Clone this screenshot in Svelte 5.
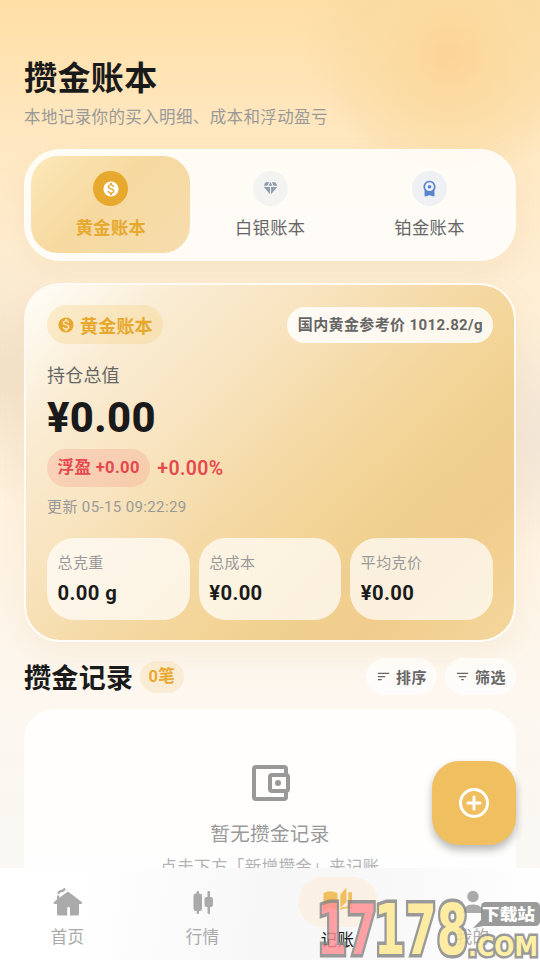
<script lang="ts">
  type Metal = 'gold' | 'silver' | 'platinum';

  const ledgers: { id: Metal; label: string }[] = [
    { id: 'gold', label: '黄金账本' },
    { id: 'silver', label: '白银账本' },
    { id: 'platinum', label: '铂金账本' },
  ];

  const stats = [
    { label: '总克重', value: '0.00 g' },
    { label: '总成本', value: '¥0.00' },
    { label: '平均克价', value: '¥0.00' },
  ];

  const navItems = [
    { id: 'home', label: '首页' },
    { id: 'market', label: '行情' },
    { id: 'ledger', label: '记账' },
    { id: 'me', label: '我的' },
  ];

  let selected = $state<Metal>('gold');
  let page = $state('ledger');
</script>

{#snippet coin()}
  <svg viewBox="0 0 24 24" fill="currentColor">
    <path
      d="M12 2C6.48 2 2 6.48 2 12s4.48 10 10 10 10-4.48 10-10S17.52 2 12 2zm1.41 16.09V20h-2.67v-1.93c-1.71-.36-3.16-1.46-3.27-3.4h1.96c.1 1.05.82 1.87 2.65 1.87 1.96 0 2.4-.98 2.4-1.59 0-.83-.44-1.61-2.67-2.14-2.48-.6-4.18-1.62-4.18-3.67 0-1.72 1.39-2.84 3.11-3.21V4h2.67v1.95c1.86.45 2.79 1.86 2.85 3.39H14.3c-.05-1.11-.64-1.87-2.22-1.87-1.5 0-2.4.68-2.4 1.64 0 .84.65 1.39 2.67 1.91s4.18 1.39 4.18 3.91c-.01 1.83-1.38 2.83-3.12 3.16z"
    />
  </svg>
{/snippet}

{#snippet ledgerIcon(id: Metal)}
  {#if id === 'gold'}
    {@render coin()}
  {:else if id === 'silver'}
    <svg viewBox="0 0 24 24" fill="currentColor">
      <path
        d="M12.16 3h-.32L9.21 8.25h5.58zM16.46 8.25h5.16L19 3h-5.16zM21.38 9.75h-8.63V20.1zM11.25 20.1V9.75H2.62zM7.54 8.25 10.16 3H5L2.38 8.25z"
      />
    </svg>
  {:else}
    <svg viewBox="0 0 24 24" fill="currentColor">
      <path
        fill-rule="evenodd"
        d="M12 1a8.5 8.5 0 0 0-7 13.3V23h3.5q1.5-1.5 3.5-1.5t3.5 1.5H19v-8.7A8.5 8.5 0 0 0 12 1zm0 2.3a6.2 6.2 0 1 1 0 12.4 6.2 6.2 0 0 1 0-12.4z"
      />
      <circle cx="12" cy="9.5" r="2.6" />
    </svg>
  {/if}
{/snippet}

{#snippet navIcon(id: string)}
  {#if id === 'home'}
    <svg viewBox="0 0 30 30" fill="currentColor">
      <path
        d="M15 4.5 29 15.2q.8 1.2-.7 1.7H26V27q0 1.5-1.5 1.5H17v-7q0-1.8-1.4-1.8t-1.4 1.8v7H5.5Q4 28.500 4 27V16.900H1.500q-1.500-.5-.7-1.700L4 12.500V8.500h2.300v2.300z"
      />
      <path d="M5.5 5.800q1-1.600 3-1.800 2-.3 2.800-1.700" fill="none" stroke="currentColor" stroke-width="2.5" stroke-linecap="round" />
    </svg>
  {:else if id === 'market'}
    <svg viewBox="0 0 30 30" fill="currentColor">
      <rect x="5.5" y="6.5" width="8.5" height="17.5" rx="2.2" />
      <rect x="8.5" y="4" width="2.5" height="23" rx="1.2" />
      <rect x="16.5" y="10" width="8.5" height="10" rx="2.2" />
      <rect x="19.5" y="4" width="2.5" height="23" rx="1.2" />
    </svg>
  {:else if id === 'ledger'}
    <svg viewBox="0 0 32 32" fill="currentColor">
      <path d="M.5 6.500Q7 2.500 15.500 6.500v18Q7 21 .5 24.500z" />
      <path d="M18.500 8 25 .5v15.800L18.500 22z" />
      <path d="M27 5.500h4v18q-6.500-2-12.500 1v-2q4-2 8.500-1.500z" />
    </svg>
  {:else}
    <svg viewBox="0 0 30 30" fill="currentColor">
      <circle cx="15" cy="9.5" r="5.7" />
      <path d="M5 26q0-8.500 10-8.500T25 26z" />
    </svg>
  {/if}
{/snippet}

<main class="screen">
  <header class="header">
    <h1 class="header__title">攒金账本</h1>
    <p class="header__subtitle">本地记录你的买入明细、成本和浮动盈亏</p>
  </header>

  <div class="tabs">
    {#each ledgers as ledger (ledger.id)}
      <button class="tab" class:tab--active={selected === ledger.id} onclick={() => (selected = ledger.id)}>
        <span class="tab__icon tab__icon--{ledger.id}">{@render ledgerIcon(ledger.id)}</span>
        <span class="tab__label">{ledger.label}</span>
      </button>
    {/each}
  </div>

  <section class="summary">
    <div class="summary__top">
      <span class="summary__name">{@render coin()}黄金账本</span>
      <span class="summary__price">国内黄金参考价 1012.82/g</span>
    </div>
    <div class="summary__caption">持仓总值</div>
    <div class="summary__total">¥0.00</div>
    <div class="summary__profit">
      <span class="summary__float">浮盈 +0.00</span>
      <span class="summary__percent">+0.00%</span>
    </div>
    <div class="summary__updated">更新 05-15 09:22:29</div>
    <div class="stats">
      {#each stats as stat (stat.label)}
        <div class="stat">
          <span class="stat__label">{stat.label}</span>
          <span class="stat__value">{stat.value}</span>
        </div>
      {/each}
    </div>
  </section>

  <div class="records">
    <h2 class="records__title">攒金记录</h2>
    <span class="records__count">0笔</span>
    <button class="records__action">
      <svg viewBox="0 0 24 24" fill="currentColor"><path d="M3 18h6v-2H3v2zM3 6v2h18V6H3zm0 7h12v-2H3v2z" /></svg>排序
    </button>
    <button class="records__action">
      <svg viewBox="0 0 24 24" fill="currentColor"><path d="M10 18h4v-2h-4v2zM3 6v2h18V6H3zm3 7h12v-2H6v2z" /></svg>筛选
    </button>
  </div>

  <section class="empty">
    <svg class="empty__icon" viewBox="0 0 38 36" fill="none" stroke="currentColor" stroke-width="4">
      <path d="M34 10V4q0-2-2-2H4Q2 2 2 4v28q0 2 2 2h28q2 0 2-2v-6" />
      <rect x="18" y="10" width="18" height="16" rx="2" />
      <circle cx="26" cy="18" r="3" fill="currentColor" stroke="none" />
    </svg>
    <p class="empty__title">暂无攒金记录</p>
    <p class="empty__hint">点击下方「新增攒金」来记账</p>
  </section>

  <button class="fab" aria-label="新增攒金">
    <svg viewBox="0 0 30 30" fill="none" stroke="currentColor" stroke-width="3">
      <circle cx="15" cy="15" r="13.5" />
      <path d="M15 9v12M9 15h12" stroke-linecap="round" />
    </svg>
  </button>

  <nav class="nav">
    {#each navItems as item (item.id)}
      <button class="nav__item" class:nav__item--active={page === item.id} onclick={() => (page = item.id)}>
        <span class="nav__icon">{@render navIcon(item.id)}</span>
        <span class="nav__label">{item.label}</span>
      </button>
    {/each}
  </nav>

  <svg class="stamp" viewBox="0 0 226 62">
    <g class="stamp__digits">
      <text x="3" y="56" textLength="60" lengthAdjust="spacingAndGlyphs" fill="#ff8f95">17</text>
      <text x="60" y="56" textLength="94" lengthAdjust="spacingAndGlyphs" fill="#ffe98f">178</text>
    </g>
    <path d="M172 4h49q5 0 5 5v14q0 5-5 5h-51l-11 2 8-8V9q0-5 5-5z" fill="#858585" />
    <text class="stamp__tag" x="168" y="22" textLength="53" lengthAdjust="spacingAndGlyphs">下载站</text>
    <text class="stamp__domain" x="154" y="58" textLength="70" lengthAdjust="spacingAndGlyphs">.COM</text>
  </svg>
</main>

<style>
  :global(body) {
    margin: 0;
    overflow: hidden;
  }

  .screen {
    position: relative;
    box-sizing: border-box;
    width: 540px;
    height: 960px;
    padding: 57px 24px 0;
    overflow: hidden;
    font-family: Roboto, 'Noto Sans CJK SC', sans-serif;
    letter-spacing: 0.375px;
    color: #1a1a1a;
    background:
      radial-gradient(circle at 450px 57px, rgba(254, 208, 148, 0.8), rgba(254, 217, 155, 0.6) 40px, rgba(254, 222, 162, 0.45) 75px, rgba(253, 224, 170, 0) 125px),
      radial-gradient(circle at 450px 35px, rgba(243, 214, 158, 0.5) 80px, rgba(243, 220, 175, 0) 150px),
      radial-gradient(circle at -10px 375px, rgba(226, 208, 180, 0.5), rgba(236, 220, 195, 0.3) 70px, rgba(240, 226, 205, 0) 130px),
      radial-gradient(circle at 560px 435px, rgba(236, 224, 212, 0.75), rgba(242, 230, 216, 0) 125px),
      linear-gradient(#ffdfa5 0, #ffe6bd 115px, #feeed4 280px, #fff1dd 480px, #fdf7ef 690px, #f9f8f3 870px);
  }

  button {
    padding: 0;
    border: 0;
    background: none;
    font: inherit;
    letter-spacing: inherit;
    color: inherit;
  }

  svg {
    display: block;
  }

  .header {
    height: 92px;
  }

  .header__title {
    margin: 0;
    font-size: 33px;
    line-height: 43px;
    font-weight: 700;
    letter-spacing: 0.375px;
  }

  .header__subtitle {
    margin: 5px 0 0;
    font-size: 16.5px;
    line-height: 25px;
    color: #999;
  }

  .tabs {
    display: grid;
    grid-template-columns: repeat(3, 1fr);
    box-sizing: border-box;
    height: 112px;
    padding: 6px;
    border: 1.5px solid #fffefa;
    border-radius: 36px;
    background: rgba(255, 255, 255, 0.84);
    box-shadow: 0 12px 27px rgba(196, 160, 100, 0.1);
  }

  .tab {
    display: flex;
    flex-direction: column;
    align-items: center;
    box-sizing: border-box;
    height: 97px;
    padding: 15px 0 0 0.5px;
    border-radius: 27px;
    font-size: 17.25px;
    color: #666;
  }

  .tab--active {
    background: linear-gradient(135deg, #fce8b9, #f6d99f 45%, #f6ddae);
    color: #e6a82d;
    font-weight: 700;
  }

  .tab__icon {
    display: grid;
    place-items: center;
    width: 35px;
    height: 35px;
    border-radius: 50%;
    background: #f3f3f1;
    color: #909cad;
  }

  .tab__icon svg {
    width: 18px;
    height: 18px;
  }

  .tab__icon--gold {
    background: #e6a82d;
    color: #fff;
  }

  .tab__icon--silver svg {
    width: 17px;
    height: 17px;
  }

  .tab__icon--platinum {
    background: #eff0f3;
    color: #5984ce;
  }

  .tab__icon--platinum svg {
    width: 17px;
    height: 17px;
  }

  .tab__label {
    margin-top: 10px;
    line-height: 25px;
  }

  .summary {
    box-sizing: border-box;
    height: 359px;
    margin-top: 22px;
    padding: 20px 21px 0;
    border: 2px solid rgba(255, 255, 255, 0.75);
    border-radius: 36px;
    background: linear-gradient(136deg, #fffefa 0, #faecd3 18%, #f8e4c0 34%, #f5d9a4 52%, #f3d496 64%, #efcf8f 73%, #f1cd8d 82%, #f4d69c 100%);
    background-clip: padding-box;
    box-shadow: 0 12px 30px rgba(200, 160, 80, 0.1);
  }

  .summary__top {
    display: flex;
    align-items: center;
    justify-content: space-between;
  }

  .summary__name {
    display: flex;
    align-items: center;
    gap: 5px;
    box-sizing: border-box;
    height: 39px;
    padding: 0 10px;
    border-radius: 20px;
    background: rgba(245, 204, 120, 0.3);
    color: #e6a82d;
    font-size: 18px;
    font-weight: 700;
    letter-spacing: 0.2px;
  }

  .summary__name svg {
    width: 18px;
    height: 18px;
  }

  .summary__price {
    padding: 0 10px 0 10.5px;
    border-radius: 18px;
    background: rgba(255, 255, 255, 0.83);
    color: #666;
    font-size: 15px;
    line-height: 36px;
    font-weight: 700;
  }

  .summary__caption {
    margin-top: 18px;
    font-size: 18px;
    line-height: 27px;
    color: #666;
    letter-spacing: 0.2px;
  }

  .summary__total {
    margin-top: 3px;
    font-size: 41.75px;
    line-height: 52px;
    font-weight: 800;
  }

  .summary__profit {
    display: flex;
    align-items: center;
    gap: 7px;
    margin-top: 5px;
    color: #e5484d;
    font-weight: 700;
  }

  .summary__float {
    padding: 0 10.5px;
    border-radius: 20px;
    background: rgba(239, 83, 80, 0.15);
    font-size: 16.5px;
    line-height: 38px;
  }

  .summary__percent {
    font-size: 19.5px;
    font-weight: 600;
  }

  .summary__updated {
    margin-top: 9px;
    font-size: 15px;
    line-height: 22px;
    color: #999;
  }

  .stats {
    display: grid;
    grid-template-columns: repeat(3, 1fr);
    gap: 9px;
    margin-top: 20px;
  }

  .stat {
    display: flex;
    flex-direction: column;
    box-sizing: border-box;
    height: 82px;
    padding: 13px 10.5px 0;
    border-radius: 27px;
    background: rgba(255, 255, 255, 0.7);
  }

  .stat__label {
    font-size: 15px;
    line-height: 24px;
    color: #999;
  }

  .stat__value {
    margin-top: 3px;
    font-size: 20.25px;
    line-height: 30px;
    font-weight: 700;
  }

  .records {
    display: flex;
    align-items: center;
    height: 37px;
    margin-top: 16px;
  }

  .records__title {
    margin: 0;
    padding-top: 5px;
    font-size: 27px;
    line-height: 37px;
    font-weight: 700;
    letter-spacing: 0.375px;
  }

  .records__count {
    margin: 0 auto 0 6px;
    padding: 0 9px;
    border-radius: 16px;
    background: rgba(240, 200, 120, 0.22);
    color: #e9a931;
    font-size: 16.5px;
    line-height: 32px;
    font-weight: 700;
  }

  .records__action {
    display: flex;
    align-items: center;
    justify-content: center;
    gap: 5px;
    width: 71px;
    height: 37px;
    margin-left: 8px;
    border-radius: 19px;
    background: rgba(255, 255, 255, 0.65);
    color: #666;
    font-size: 15px;
    font-weight: 700;
  }

  .records__action svg {
    width: 15px;
    height: 15px;
  }

  .empty {
    display: flex;
    flex-direction: column;
    align-items: center;
    height: 300px;
    margin-top: 14px;
    padding: 56px 0 0;
    border-radius: 30px;
    background: rgba(255, 255, 255, 0.85);
    color: #999;
  }

  .empty__icon {
    width: 38px;
    height: 36px;
    padding-left: 1px;
  }

  .empty__title {
    margin: 19px 0 0;
    font-size: 19.5px;
    line-height: 30px;
  }

  .empty__hint {
    margin: 6px 0 0;
    font-size: 16.5px;
    line-height: 24px;
    color: #b3b3b3;
  }

  .fab {
    position: absolute;
    top: 760.5px;
    right: 24px;
    display: grid;
    place-items: center;
    width: 84px;
    height: 84px;
    border-radius: 27px;
    background: #f0bf60;
    box-shadow: 0 5px 9px rgba(0, 0, 0, 0.28);
    color: #fff;
  }

  .fab svg {
    width: 30px;
    height: 30px;
  }

  .nav {
    position: absolute;
    inset: auto 0 0;
    display: grid;
    grid-template-columns: repeat(4, 1fr);
    height: 92px;
    background: linear-gradient(100deg, #fff 15%, #f7f7f8 50%, #f8f8f8 70%, #fff);
    color: #aaa;
  }

  .nav__item {
    display: flex;
    flex-direction: column;
    align-items: center;
    padding-top: 9px;
    font-size: 16.5px;
  }

  .nav__icon {
    display: grid;
    place-items: center;
    width: 80px;
    height: 50px;
    border-radius: 25px;
  }

  .nav__icon svg {
    width: 30px;
    height: 30px;
  }

  .nav__label {
    margin-top: -1px;
    line-height: 24px;
  }

  .nav__item--active {
    color: #1a1a1a;
  }

  .nav__item--active .nav__icon {
    background: #faf1e4;
    color: #f0bf60;
  }

  .nav__item--active .nav__label {
    margin-top: 2px;
  }

  .stamp {
    position: absolute;
    right: 0;
    bottom: 0;
    width: 226px;
    height: 62px;
    opacity: 0.82;
    pointer-events: none;
  }

  .stamp text {
    font-family: 'DejaVu Sans', sans-serif;
    font-weight: 700;
    letter-spacing: 0;
    paint-order: stroke;
    stroke: #858585;
    stroke-width: 7px;
  }

  .stamp__digits {
    font-size: 69px;
  }

  .stamp .stamp__tag {
    font-family: 'Noto Sans CJK SC', sans-serif;
    font-size: 16px;
    font-weight: 900;
    fill: #fff;
    stroke: none;
  }

  .stamp .stamp__domain {
    font-size: 27px;
    fill: #ffee91;
    stroke-width: 5px;
  }
</style>
